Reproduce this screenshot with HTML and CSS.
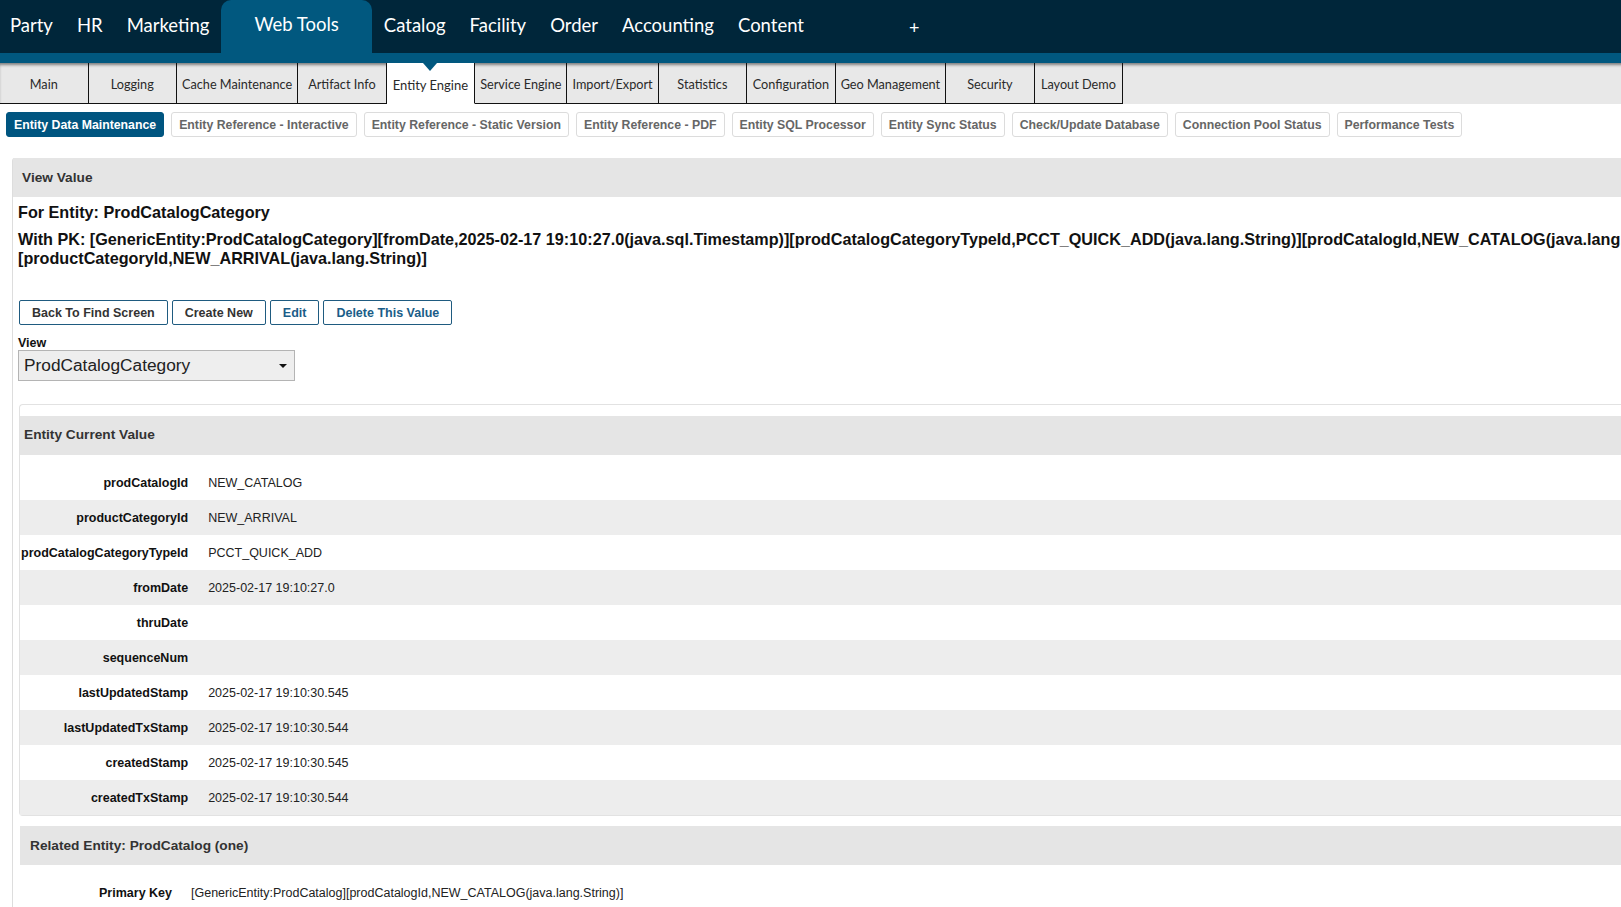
FILE: index.html
```html
<!DOCTYPE html>
<html lang="en">
<head>
<meta charset="utf-8">
<title>View Value - Web Tools</title>
<link rel="stylesheet" href="styles.css">
</head>
<body>
<header class="topbar">
  <nav class="appnav">
    <a class="app">Party</a>
    <a class="app">HR</a>
    <a class="app">Marketing</a>
    <a class="app app-active">Web Tools</a>
    <a class="app">Catalog</a>
    <a class="app">Facility</a>
    <a class="app">Order</a>
    <a class="app">Accounting</a>
    <a class="app">Content</a>
    <a class="app app-more">+</a>
  </nav>
</header>
<div class="stripe"></div>
<div class="subnav">
  <ul class="tabs">
    <li class="tab">Main</li>
    <li class="tab">Logging</li>
    <li class="tab">Cache Maintenance</li>
    <li class="tab">Artifact Info</li>
    <li class="tab tab-active">Entity Engine</li>
    <li class="tab">Service Engine</li>
    <li class="tab">Import/Export</li>
    <li class="tab">Statistics</li>
    <li class="tab">Configuration</li>
    <li class="tab">Geo Management</li>
    <li class="tab">Security</li>
    <li class="tab">Layout Demo</li>
  </ul>
</div>
<div class="buttonbar">
  <a class="bb-btn bb-active">Entity Data Maintenance</a>
  <a class="bb-btn">Entity Reference - Interactive</a>
  <a class="bb-btn">Entity Reference - Static Version</a>
  <a class="bb-btn">Entity Reference - PDF</a>
  <a class="bb-btn">Entity SQL Processor</a>
  <a class="bb-btn">Entity Sync Status</a>
  <a class="bb-btn">Check/Update Database</a>
  <a class="bb-btn">Connection Pool Status</a>
  <a class="bb-btn">Performance Tests</a>
</div>
<main class="panel">
  <div class="panel-title">View Value</div>
  <div class="panel-body">
    <h2 class="entity-title">For Entity: ProdCatalogCategory</h2>
    <h2 class="entity-pk">With PK: [GenericEntity:ProdCatalogCategory][fromDate,2025-02-17 19:10:27.0(java.sql.Timestamp)][prodCatalogCategoryTypeId,PCCT_QUICK_ADD(java.lang.String)][prodCatalogId,NEW_CATALOG(java.lang.String)][productCategoryId,NEW_ARRIVAL(java.lang.String)]</h2>
    <div class="actions">
      <a class="act-btn">Back To Find Screen</a>
      <a class="act-btn">Create New</a>
      <a class="act-btn act-blue">Edit</a>
      <a class="act-btn act-blue">Delete This Value</a>
    </div>
    <div class="view-label">View</div>
    <div class="select">ProdCatalogCategory<span class="select-arrow"></span></div>
    <section class="box">
      <div class="box-title">Entity Current Value</div>
      <table class="fields">
        <tr><td class="fl">prodCatalogId</td><td class="fv">NEW_CATALOG</td></tr>
        <tr><td class="fl">productCategoryId</td><td class="fv">NEW_ARRIVAL</td></tr>
        <tr><td class="fl">prodCatalogCategoryTypeId</td><td class="fv">PCCT_QUICK_ADD</td></tr>
        <tr><td class="fl">fromDate</td><td class="fv">2025-02-17 19:10:27.0</td></tr>
        <tr><td class="fl">thruDate</td><td class="fv"></td></tr>
        <tr><td class="fl">sequenceNum</td><td class="fv"></td></tr>
        <tr><td class="fl">lastUpdatedStamp</td><td class="fv">2025-02-17 19:10:30.545</td></tr>
        <tr><td class="fl">lastUpdatedTxStamp</td><td class="fv">2025-02-17 19:10:30.544</td></tr>
        <tr><td class="fl">createdStamp</td><td class="fv">2025-02-17 19:10:30.545</td></tr>
        <tr><td class="fl">createdTxStamp</td><td class="fv">2025-02-17 19:10:30.544</td></tr>
      </table>
    </section>
    <section class="related">
      <div class="related-title">Related Entity: ProdCatalog (one)</div>
      <table class="rel-fields">
        <tr><td class="rl">Primary Key</td><td class="rv">[GenericEntity:ProdCatalog][prodCatalogId,NEW_CATALOG(java.lang.String)]</td></tr>
      </table>
    </section>
  </div>
</main>
</body>
</html>
```
FILE: styles.css
```css
html {
  overflow: hidden;
  background: #fff;
}
body {
  margin: 0;
  width: 1800px;
  font-family: "Liberation Sans", Arial, sans-serif;
  color: #222;
}

/* top application bar */
.topbar {
  height: 53px;
  background: #00263a;
}
.appnav {
  display: flex;
  height: 100%;
}
.app {
  display: flex;
  align-items: center;
  padding: 0 12px 3px;
  font-family: Lato, "Noto Sans", sans-serif;
  font-size: 18.5px;
  color: #fff;
}
.app:first-child {
  padding-left: 10px;
}
.app-active {
  padding: 0 33px 5px;
  background: #01587f;
  border-radius: 10px 10px 0 0;
}
.app-more {
  margin-left: 81px;
  padding-bottom: 0;
  font-size: 18px;
}
.stripe {
  height: 10px;
  background: #01587f;
}

/* sub navigation tabs */
.subnav {
  height: 41px;
  background: #e8e8e8;
  box-shadow: inset 0 3px 3px -1px rgba(0, 0, 0, 0.45);
}
.tabs {
  display: flex;
  margin: 0;
  padding: 0;
  list-style: none;
  height: 100%;
}
.tab {
  box-sizing: border-box;
  position: relative;
  display: flex;
  align-items: center;
  justify-content: center;
  min-width: 88.5px;
  height: 41px;
  padding: 1px 5px 0;
  border-right: 1px solid #111;
  border-bottom: 1px solid #111;
  font-family: Lato, "Noto Sans", sans-serif;
  font-size: 12.7px;
  color: #2a2a2a;
}
.tab-active {
  background: #fff;
  border-bottom-color: transparent;
  font-size: 13px;
  padding-top: 3px;
}
.tab-active::before {
  content: "";
  position: absolute;
  top: 0;
  left: 50%;
  margin-left: -7px;
  border-left: 7px solid transparent;
  border-right: 7px solid transparent;
  border-top: 8px solid #01587f;
}

/* button bar */
.buttonbar {
  display: flex;
  gap: 7px;
  padding: 8px 6px 0;
}
.bb-btn {
  display: flex;
  align-items: center;
  height: 25px;
  box-sizing: border-box;
  padding: 0 7px;
  border: 1px solid #dcdcdc;
  border-radius: 3px;
  background: #fff;
  font-size: 12.3px;
  font-weight: bold;
  color: #666;
  white-space: nowrap;
}
.bb-active {
  background: #005580;
  border-color: #005580;
  color: #fff;
}

/* main panel */
.panel {
  display: block;
  margin: 21px 0 0 12px;
  border-left: 1px solid #ddd;
  border-top-left-radius: 3px;
}
.panel-title {
  display: flex;
  align-items: center;
  height: 39px;
  padding-left: 9px;
  background: #e5e5e5;
  font-size: 13.7px;
  font-weight: bold;
  color: #333;
}
.panel-body {
  padding-left: 5px;
}
.entity-title,
.entity-pk {
  margin: 0;
  font-size: 16.2px;
  font-weight: bold;
  color: #111;
}
.entity-title {
  padding-top: 6px;
  line-height: 18px;
}
.entity-pk {
  margin-top: 9px;
  line-height: 18.5px;
}
.actions {
  display: flex;
  gap: 4px;
  margin-top: 33px;
  padding-left: 1px;
}
.act-btn {
  display: flex;
  align-items: center;
  height: 25px;
  box-sizing: border-box;
  padding: 0 12px;
  border: 1px solid #1f5b80;
  border-radius: 2px;
  background: #fff;
  font-size: 12.5px;
  font-weight: bold;
  color: #333;
}
.act-blue {
  color: #1a5d88;
}
.view-label {
  margin-top: 11px;
  font-size: 12.5px;
  font-weight: bold;
  color: #111;
  line-height: 14px;
}
.select {
  position: relative;
  box-sizing: border-box;
  display: flex;
  align-items: center;
  width: 277px;
  height: 31px;
  padding-left: 5px;
  border: 1px solid #b4b4b4;
  background: #eee;
  font-size: 17.3px;
  color: #222;
}
.select-arrow {
  position: absolute;
  right: 7px;
  top: 13px;
  border-left: 4px solid transparent;
  border-right: 4px solid transparent;
  border-top: 4px solid #111;
}

/* entity current value box */
.box {
  margin: 23px 0 0 1px;
  padding-top: 11px;
  border: 1px solid #e2e2e2;
  border-right: none;
  border-radius: 4px 0 0 4px;
}
.box-title {
  display: flex;
  align-items: center;
  height: 39px;
  padding: 0 0 3px 4px;
  box-sizing: border-box;
  background: #e5e5e5;
  font-size: 13.7px;
  font-weight: bold;
  color: #333;
}
.fields {
  width: 100%;
  margin-top: 10px;
  border-collapse: collapse;
  font-size: 12.5px;
}
.fields tr {
  height: 35px;
}
.fields tr:nth-child(even) {
  background: #ededed;
}
.fl {
  width: 1px;
  padding: 0 5px 0 1px;
  text-align: right;
  font-weight: bold;
  white-space: nowrap;
  color: #111;
}
.fv {
  padding: 0 0 0 15px;
  color: #222;
}

/* related entity */
.related {
  margin: 10px 0 0 2px;
}
.related-title {
  display: flex;
  align-items: center;
  height: 39px;
  padding-left: 10px;
  background: #e5e5e5;
  font-size: 13.7px;
  font-weight: bold;
  color: #333;
}
.rel-fields {
  margin-top: 10px;
  border-collapse: collapse;
  font-size: 12.5px;
}
.rel-fields tr {
  height: 35px;
}
.rl {
  width: 152px;
  padding: 0 4px 0 0;
  text-align: right;
  font-weight: bold;
  color: #111;
}
.rv {
  padding: 0 0 0 15px;
  color: #222;
}
```
